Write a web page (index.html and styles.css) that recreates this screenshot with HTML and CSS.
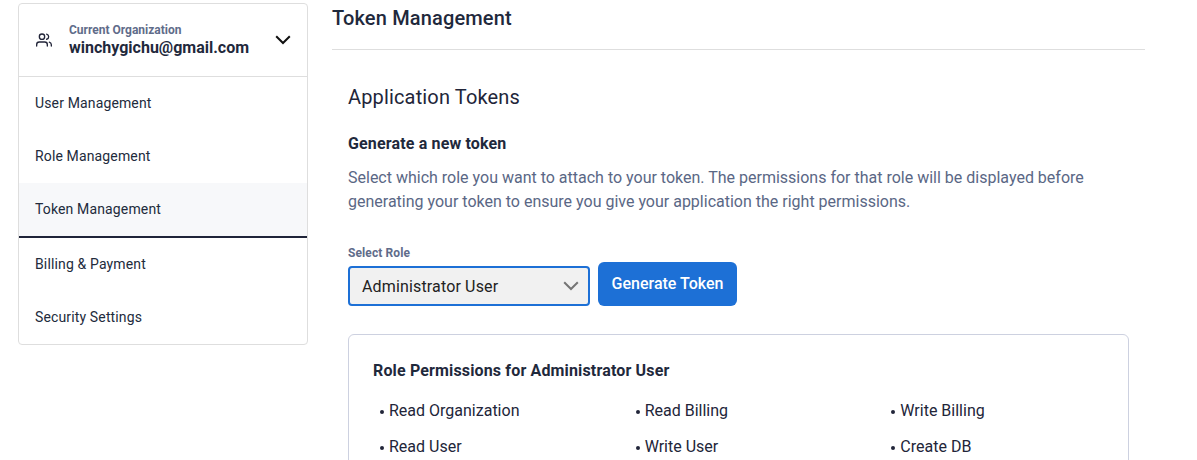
FILE: index.html
```
<!DOCTYPE html>
<html lang="en">
<head>
<meta charset="utf-8">
<title>Token Management</title>
<link rel="stylesheet" href="styles.css">
</head>
<body>
<div class="layout">
  <aside class="sidebar">
    <div class="org">
      <svg class="org-icon" viewBox="0 0 24 24" fill="none" stroke="currentColor" stroke-width="2" stroke-linecap="round" stroke-linejoin="round"><path d="M17 21v-2a4 4 0 0 0-4-4H5a4 4 0 0 0-4 4v2"/><circle cx="9" cy="7" r="4"/><path d="M23 21v-2a4 4 0 0 0-3-3.87"/><path d="M16 3.13a4 4 0 0 1 0 7.75"/></svg>
      <div class="org-text">
        <div class="org-label">Current Organization</div>
        <div class="org-name">winchygichu@gmail.com</div>
      </div>
      <svg class="org-chevron" viewBox="0 0 16 10" fill="none" stroke="currentColor" stroke-width="2"><path d="M1.2 1.2 8 8l6.8-6.8"/></svg>
    </div>
    <nav>
      <a class="nav-item">User Management</a>
      <a class="nav-item">Role Management</a>
      <a class="nav-item active">Token Management</a>
      <a class="nav-item">Billing &amp; Payment</a>
      <a class="nav-item">Security Settings</a>
    </nav>
  </aside>
  <main class="main">
    <h1 class="page-title">Token Management</h1>
    <section class="content">
      <h2 class="section-title">Application Tokens</h2>
      <h3 class="subtitle">Generate a new token</h3>
      <p class="description">Select which role you want to attach to your token. The permissions for that role will be displayed before generating your token to ensure you give your application the right permissions.</p>
      <div class="form">
        <div class="field">
          <div class="field-label">Select Role</div>
          <div class="select">
            <span>Administrator User</span>
            <svg class="select-chevron" viewBox="0 0 16 10" fill="none" stroke="currentColor" stroke-width="2"><path d="M1.2 1.2 8 8l6.8-6.8"/></svg>
          </div>
        </div>
        <button class="generate">Generate Token</button>
      </div>
      <div class="card">
        <h3 class="card-title">Role Permissions for Administrator User</h3>
        <ul class="permissions">
          <li>Read Organization</li>
          <li>Read Billing</li>
          <li>Write Billing</li>
          <li>Read User</li>
          <li>Write User</li>
          <li>Create DB</li>
        </ul>
      </div>
    </section>
  </main>
</div>
</body>
</html>
```
FILE: styles.css
```
* { box-sizing: border-box; }
body {
  margin: 0;
  background: #fff;
  color: #222539;
  font-family: Roboto, sans-serif;
  font-size: 16px;
}
h1, h2, h3, p, ul { margin: 0; padding: 0; }
.layout { display: flex; align-items: flex-start; gap: 24px; height: 460px; overflow: hidden; padding: 3px 52px 0 18px; }
.sidebar { width: 290px; flex: none; border: 1px solid #dedede; border-radius: 4px; }
.org { display: flex; align-items: center; height: 73px; padding: 0 16px 0 17px; border-bottom: 1px solid #dedede; }
.org-icon { width: 16px; height: 16px; flex: none; color: #222539; }
.org-text { flex: 1; margin-left: 17px; }
.org-label { font-size: 12px; line-height: 14px; padding-bottom: 2px; font-weight: 700; color: #5f6c8a; }
.org-name { font-size: 16px; line-height: 18px; font-weight: 700; color: #1f293c; }
.org-chevron { width: 16px; height: 10px; color: #111; }
.nav-item { display: block; padding: 16px; font-size: 14px; line-height: 21px; letter-spacing: 0.14px; color: #222b3c; }
.nav-item.active { background: #f7f8fa; border-bottom: 2px solid #1f2439; }
.main { width: 813px; flex: none; }
.page-title { height: 47px; padding-top: 1px; border-bottom: 1px solid #dedede; font-size: 20px; line-height: 28px; font-weight: 500; letter-spacing: 0.15px; color: #1f293c; }
.content { padding: 32px 16px 0; }
.section-title { font-size: 20px; line-height: 30px; font-weight: 400; letter-spacing: 0.15px; }
.subtitle { margin-top: 20px; font-size: 16px; line-height: 24px; font-weight: 700; letter-spacing: 0.15px; color: #1f293c; }
.description { margin-top: 10px; line-height: 24px; color: #5a6785; }
.form { display: flex; align-items: flex-end; gap: 8px; margin-top: 31px; }
.field-label { font-size: 12px; line-height: 16px; font-weight: 700; letter-spacing: 0.1px; color: #5f6c8a; }
.select { display: flex; align-items: center; justify-content: space-between; width: 242px; height: 40px; margin-top: 5px; padding: 0 9px 0 12px; border: 2px solid #1d70d6; border-radius: 4px; background: #f1f1f1; color: #222; letter-spacing: 0.15px; }
.select-chevron { width: 16px; height: 10px; color: #757575; }
.generate { width: 139px; height: 44px; padding: 0; border: 0; border-radius: 6px; background: #1d70d6; color: #fff; font: 500 16px/24px Roboto, sans-serif; }
.card { height: 180px; margin-top: 28px; padding: 24px; border: 1px solid #cdd1e0; border-radius: 6px; }
.card-title { font-size: 16px; line-height: 24px; font-weight: 700; letter-spacing: 0.15px; color: #1f293c; }
.permissions { display: grid; grid-template-columns: repeat(3, 255.67px); row-gap: 12px; margin-top: 16px; list-style: none; }
.permissions li { display: flex; align-items: center; gap: 5px; padding-left: 7px; line-height: 24px; }
.permissions li::before { content: ""; width: 4px; height: 4px; margin-top: 2px; border-radius: 50%; background: currentColor; }
```
